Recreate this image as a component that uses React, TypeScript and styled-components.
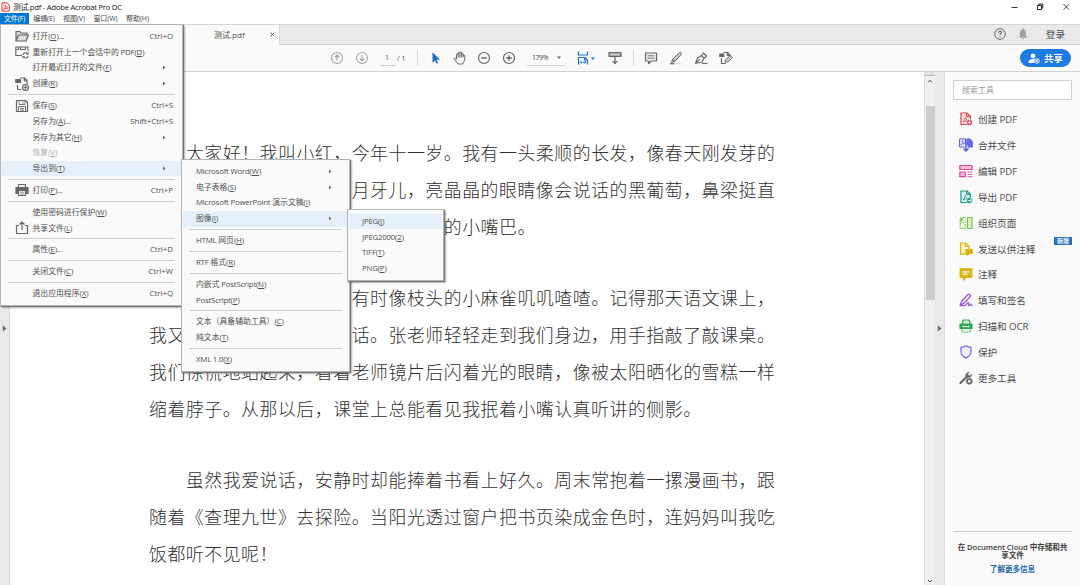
import React from "react";
import styled, { createGlobalStyle } from "styled-components";

const Global = createGlobalStyle`
  *, *::before, *::after { box-sizing: border-box; }
  body {
    margin: 0;
    overflow: hidden;
    background: #fff;
    color: #4b4b4b;
    font-family: "Open Sans", "Noto Sans CJK SC", sans-serif;
  }
  svg { display: block; flex: none; }
`;

const Window = styled.div`
  position: relative;
  display: flex;
  flex-direction: column;
  width: 1080px;
  height: 585px;
  overflow: hidden;
`;

const TitleBar = styled.header`
  display: flex;
  align-items: center;
  height: 13px;
  padding-left: 1px;
  background: #fff;
  color: #222;
  font-size: 7.8px;
  letter-spacing: -0.3px;
  line-height: 12px;
  white-space: nowrap;
`;
const Title = styled.span`margin-left: 3px;`;
const WindowButtons = styled.div`
  display: flex;
  gap: 18px;
  margin: 0 10px 0 auto;
`;

const MenuBar = styled.nav`
  display: flex;
  height: 11px;
  background: #fff;
  font-size: 7px;
  letter-spacing: -0.1px;
  line-height: 11px;
`;
const MenuName = styled.span<{ $active?: boolean; $width: number }>`
  width: ${(p) => p.$width}px;
  text-align: center;
  white-space: nowrap;
  background: ${(p) => (p.$active ? "#0078d4" : "transparent")};
  color: ${(p) => (p.$active ? "#fff" : "#444")};
`;

const TabBar = styled.div`
  display: flex;
  height: 21px;
  border-top: 1px solid #d6d6d6;
  border-bottom: 1px solid #d4d4d4;
  background: #e9e9e9;
`;
const Tab = styled.div`
  display: flex;
  align-items: center;
  width: 280px;
  height: 20px;
  padding: 0 4px 1px 214px;
  background: #fafafa;
  border-right: 1px solid #d8d8d8;
  font-size: 8px;
  white-space: nowrap;
  svg { margin-left: auto; }
`;
const Account = styled.div`
  display: flex;
  align-items: center;
  margin: 0 15px 0 auto;
  padding-bottom: 1px;
  font-size: 9.6px;
  gap: 12px;
  span { margin-left: 6px; }
`;

const Toolbar = styled.div`
  display: flex;
  align-items: center;
  height: 27px;
  padding: 0 9px 0 330px;
  background: #fafafa;
  border-bottom: 1px solid #d0d0d0;
  font-size: 7px;
`;
const Tool = styled.span<{ $gap?: number }>`margin-left: ${(p) => p.$gap ?? 0}px;`;
const Field = styled.span<{ $width: number; $gap: number }>`
  display: flex;
  align-items: center;
  justify-content: space-between;
  width: ${(p) => p.$width}px;
  height: 15px;
  margin-left: ${(p) => p.$gap}px;
  padding: 0 4px 0 5px;
  border-bottom: 1px solid #d2d2d2;
  letter-spacing: -0.4px;
`;
const Divider = styled.span<{ $gap: number }>`
  width: 1px;
  height: 16px;
  margin-left: ${(p) => p.$gap}px;
  background: #d8d8d8;
`;
const ShareButton = styled.button`
  display: flex;
  align-items: center;
  justify-content: center;
  gap: 4px;
  width: 51px;
  height: 18px;
  margin-left: auto;
  padding: 0;
  border: 0;
  border-radius: 9px;
  background: #1e7be4;
  color: #fff;
  font: 700 9.4px "Noto Sans CJK SC", sans-serif;
`;

const Workspace = styled.main`
  display: flex;
  flex: 1;
  min-height: 0;
`;
const Gutter = styled.div`
  display: flex;
  align-items: center;
  justify-content: center;
  width: 10px;
  background: #e9e9e9;
  border-right: 1px solid #dcdcdc;
`;
const Page = styled.article`
  flex: 1;
  padding: 62px 0 0 139px;
  background: #fff;
  color: #303030;
  font-family: "Noto Sans CJK SC", sans-serif;
  font-size: 17.9px;
  font-weight: 300;
  letter-spacing: 0.53px;
  line-height: 36.75px;
`;
const Paragraph = styled.p`
  margin: 0 0 35px;
  text-indent: 36.9px;
  white-space: pre;
`;
const ScrollBar = styled.div`
  display: flex;
  flex-direction: column;
  align-items: center;
  justify-content: space-between;
  width: 11px;
  padding: 0 0 1px;
  background: #f0f0f0;
  border-left: 1px solid #dcdcdc;
`;
const Thumb = styled.div`
  width: 9px;
  height: 194px;
  margin: 16px 0 auto;
  background: #cdcdcd;
`;
const ScrollTop = styled.div`
  display: flex;
  flex-direction: column;
  align-items: center;
  height: 18px;
  svg { margin-top: 3px; }
`;
const ScrollCap = styled.div`
  width: 10px;
  height: 4px;
  background: #e3e3e3;
  border-bottom: 1px solid #bcbcbc;
`;

const Panel = styled.aside`
  display: flex;
  flex-direction: column;
  width: 135px;
  padding: 8px 8px 12px;
  background: #fafafa;
`;
const Search = styled.div`
  height: 20px;
  padding-left: 8px;
  border: 1px solid #d0d0d0;
  background: #fff;
  color: #999;
  font-size: 8px;
  line-height: 18px;
`;
const ToolList = styled.div`
  margin-top: 6.4px;
`;
const ToolRow = styled.div`
  position: relative;
  display: flex;
  align-items: center;
  gap: 5px;
  height: 25.87px;
  padding-left: 6px;
  font-size: 9.6px;
  letter-spacing: -0.05px;
  white-space: nowrap;
`;
const NewBadge = styled.span`
  position: absolute;
  top: 1px;
  right: 0;
  width: 18px;
  height: 8px;
  background: #2d72c0;
  color: #fff;
  font-size: 6px;
  font-weight: 700;
  line-height: 8px;
  text-align: center;
`;
const CloudNote = styled.footer`
  margin-top: auto;
  padding-top: 11px;
  border-top: 1px solid #cfcfcf;
  color: #3d3d3d;
  font-size: 7.6px;
  font-weight: 600;
  letter-spacing: -0.05px;
  line-height: 8px;
  text-align: center;
  white-space: nowrap;
`;
const More = styled.a`
  display: block;
  margin-top: 6px;
  color: #1b66b3;
`;

const Popup = styled.div<{ $x: number; $y: number; $w: number; $h: number }>`
  position: absolute;
  left: ${(p) => p.$x}px;
  top: ${(p) => p.$y}px;
  width: ${(p) => p.$w}px;
  height: ${(p) => p.$h}px;
  padding: 3.6px 1px 0;
  border: 1px solid #b4b4b4;
  background: #fafafa;
  box-shadow: 1px 1px 1px #777, 2px 2px 2px rgba(0, 0, 0, 0.25);
  font-size: 7.85px;
`;
const Item = styled.div<{ $active?: boolean; $disabled?: boolean; $pad: number }>`
  display: flex;
  align-items: center;
  height: 15.75px;
  padding: 0 8px 0 ${(p) => p.$pad}px;
  background: ${(p) => (p.$active ? "#e5f0fb" : "transparent")};
  color: ${(p) => (p.$disabled ? "#b3b3b3" : "#505050")};
  line-height: 11px;
  white-space: nowrap;
  u { text-decoration-thickness: 0.6px; text-underline-offset: 1px; }
`;
const Latin = styled.span`letter-spacing: -0.22px;`;
const IconSlot = styled.span`
  display: flex;
  justify-content: center;
  width: 14px;
  margin-right: 3.5px;
`;
const Shortcut = styled.span`margin-left: auto;`;
const Arrow = styled.span<{ $inset: number }>`
  margin: 0 ${(p) => p.$inset}px 0 auto;
`;
const Rule = styled.div`
  height: 1px;
  margin: 2.55px 6px;
  background: #d0d0d0;
`;

const Svg = ({ s = 14, children, color = "#666", w = 1.2 }: { s?: number; children: React.ReactNode; color?: string; w?: number }) => (
  <svg width={s} height={s} viewBox="0 0 14 14" fill="none" stroke={color} strokeWidth={w} strokeLinejoin="round">{children}</svg>
);
const Triangle = ({ down, color = "#666" }: { down?: boolean; color?: string }) => (
  <svg width="4" height="5" viewBox="0 0 4 5" fill={color}><path d={down ? "M0 1.5h4L2 4z" : "M1 0.5v4L3.4 2.5z"} /></svg>
);
const PaneArrow = () => (
  <svg width="5" height="7" viewBox="0 0 5 7" fill="#666"><path d="M.8.500v6L4.500 3.500z" /></svg>
);

const PdfSheet = ({ color, fill }: { color: string; fill: string }) => (
  <>
    <path d="M2 1h6l3.3 3.2V12.5H2z" fill={fill} stroke={color} />
    <path d="M7.7 1v3.5h3.6" stroke={color} />
    <path d="M4 10c1.4-1.4 2.4-3.4 2.3-5 .5 2 1.5 3.2 3 3.7-2-.1-4 .5-5.300 1.300z" stroke={color} strokeWidth=".8" />
  </>
);

const icons: Record<string, React.ReactNode> = {
  open: <Svg><path d="M1 12V2.500h4l1 1.500h6v2M1 12l2.500-6H13.500L11 12z" fill="#ddd" /></Svg>,
  reopen: <Svg w={1.1}><path d="M7 10.500H.8V2h12.200v4.500" /><path d="M.8 4.500h2.700V2.200M5.500 2v2.500h5V2" /><path d="M7.800 10a2.700 2.700 0 0 1 4.900-1M13.200 10.800a2.700 2.700 0 0 1-4.900 1" /><path d="M13.200 7.300V9.300h-2M7.800 13.500v-2h2" strokeWidth=".8" /></Svg>,
  create: <Svg><path d="M5 1h4.500L12 3.500V7M9.300 1v3H12" /><path d="M.8 2.500h4.700v3H.8z" fill="#666" /><path d="M2.500 8v4.500H6" /><circle cx="10.500" cy="10.500" r="2.900" /><path d="M10.500 8.800v3.400M8.800 10.500h3.400" /></Svg>,
  save: <Svg><path d="M1.500 1.500h9L12.500 3.500v9h-11z" /><path d="M4 1.500v4h6v-4M3.500 12.500v-5h7v5M8 2.500v2M5 9.500h4M5 11.200h4" strokeWidth=".9" /></Svg>,
  print: <Svg><path d="M3.500 4V1.500h7V4" /><path d="M1 4.500h12v6H1z" fill="#666" /><path d="M3.500 7.500h7v5h-7z" fill="#fafafa" /><path d="M5 9.200h4M5 11h4" strokeWidth=".7" /></Svg>,
  share: <Svg><path d="M4 4.500H1.500v8h11v-8H10M7 9V1.200M4.500 3.500L7 1l2.500 2.500" /></Svg>,
};

type Entry = "-" | { t: string; k?: string; icon?: string; sub?: boolean; on?: boolean; off?: boolean };

const fileMenu: Entry[] = [
  { t: "打开(&O)...", k: "Ctrl+O", icon: "open" },
  { t: "重新打开上一个会话中的 PDF(&D)", icon: "reopen" },
  { t: "打开最近打开的文件(&F)", sub: true },
  { t: "创建(&R)", icon: "create", sub: true },
  "-",
  { t: "保存(&S)", k: "Ctrl+S", icon: "save" },
  { t: "另存为(&A)...", k: "Shift+Ctrl+S" },
  { t: "另存为其它(&H)", sub: true },
  { t: "恢复(&V)", off: true },
  { t: "导出到(&T)", sub: true, on: true },
  "-",
  { t: "打印(&P)...", k: "Ctrl+P", icon: "print" },
  "-",
  { t: "使用密码进行保护(&W)" },
  { t: "共享文件(&L)", icon: "share" },
  "-",
  { t: "属性(&E)...", k: "Ctrl+D" },
  "-",
  { t: "关闭文件(&C)", k: "Ctrl+W" },
  "-",
  { t: "退出应用程序(&X)", k: "Ctrl+Q" },
];
const exportMenu: Entry[] = [
  { t: "Microsoft Word(&W)", sub: true },
  { t: "电子表格(&S)", sub: true },
  { t: "Microsoft PowerPoint 演示文稿(&I)" },
  { t: "图像(&I)", sub: true, on: true },
  "-",
  { t: "HTML 网页(&H)" },
  "-",
  { t: "RTF 格式(&R)" },
  "-",
  { t: "内嵌式 PostScript(&N)" },
  { t: "PostScript(&P)" },
  "-",
  { t: "文本（具备辅助工具）(&C)" },
  { t: "纯文本(&T)" },
  "-",
  { t: "XML 1.0(&X)" },
];
const imageMenu: Entry[] = [
  { t: "JPEG(&J)", on: true },
  { t: "JPEG2000(&2)" },
  { t: "TIFF(&T)" },
  { t: "PNG(&P)" },
];

// Latin runs are set tighter than the Chinese text around them.
const Runs = ({ text }: { text: string }) => (
  <>{text.split(/([ -~]+)/).map((run, i) => (i % 2 ? <Latin key={i}>{run}</Latin> : run))}</>
);
const Label = ({ text }: { text: string }) => {
  const [a, b] = text.split("&");
  return <span><Runs text={a} /><u>{b[0]}</u><Runs text={b.slice(1)} /></span>;
};

const Entries = ({ list, pad, slot, inset = 0 }: { list: Entry[]; pad: number; slot?: boolean; inset?: number }) => (
  <>
    {list.map((e, i) =>
      e === "-" ? <Rule key={i} /> : (
        <Item key={i} $pad={pad} $active={e.on} $disabled={e.off}>
          {slot && <IconSlot>{e.icon && icons[e.icon]}</IconSlot>}
          <Label text={e.t} />
          {e.k && <Shortcut>{e.k}</Shortcut>}
          {e.sub && <Arrow $inset={inset}><Triangle /></Arrow>}
        </Item>
      )
    )}
  </>
);

const tools: { name: string; icon: React.ReactNode; badge?: boolean }[] = [
  { name: "创建 PDF", icon: <Svg color="#d9434e"><PdfSheet color="#d9434e" fill="#fbe3e4" /><circle cx="10.500" cy="10.500" r="3" fill="#d9434e" stroke="#fafafa" strokeWidth=".6" /><path d="M10.500 8.800v3.400M8.800 10.500h3.400" stroke="#fff" strokeWidth=".9" /></Svg> },
  { name: "合并文件", icon: <Svg color="#5c5ce0" w={1}><path d="M6.500 9H.6V.8h5.900z" fill="#e7e7fb" /><path d="M1.800 6.800c1.400-1.200 2-3 1.800-4.500.4 1.800 1.200 2.800 2.200 3.200-1.300 0-2.800.4-4 1.300z" strokeWidth=".7" /><path d="M7.800.9h3L13.300 3.400V9H7.800z" fill="#6a6ae6" /><path d="M7 6.500v6.500M4.500 10.500L7 13l2.500-2.500" stroke="#fafafa" strokeWidth="3" /><path d="M7 6v6.800M4.500 10.500L7 13l2.500-2.500" strokeWidth="1.500" /></Svg> },
  { name: "编辑 PDF", icon: <Svg color="#d6459b"><path d="M.8 1.500h12.400v4H.8z" fill="#f5bede" /><path d="M.8 8h5.500v4.700H.8z" fill="#f5bede" /><path d="M8.500 8h5M8.500 10.300h5M8.500 12.700h5" strokeWidth=".9" /></Svg> },
  { name: "导出 PDF", icon: <Svg color="#179581"><PdfSheet color="#179581" fill="#dff2ee" /><circle cx="10.500" cy="10.500" r="3" fill="#179581" stroke="#fafafa" strokeWidth=".6" /><path d="M8.700 10.500h3.400M10.800 9l1.400 1.500-1.400 1.500" stroke="#fff" strokeWidth=".8" /></Svg> },
  { name: "组织页面", icon: <Svg color="#7cc24a"><path d="M8.500 1.500h4.500v11H8.500z" fill="#dff2d0" /><path d="M1.200 6h5v6.500h-5z" fill="#eef8e6" strokeDasharray="1.500 .8" /><path d="M1 1.500l2.500 3M7 1.500H4.500L2.500 4M1 3.500v1.300h2" /></Svg> },
  { name: "发送以供注释", badge: true, icon: <Svg color="#d9b316"><path d="M1.500 1h5L10 4.200v8H1.500z" fill="#fbf2c6" /><path d="M6.300 1v3.500H10" /><path d="M7 7.500h6.300v4H10L8.500 13v-1.500H7z" fill="#d9b316" /></Svg> },
  { name: "注释", icon: <Svg color="#d9b316"><path d="M1.200 1.800h11.600v8.500H7.200L4.500 13v-2.700H1.200z" fill="#d9b316" /><path d="M3.500 4.800h7M3.500 7.200h5" stroke="#fff" /></Svg> },
  { name: "填写和签名", icon: <Svg color="#9652d9"><path d="M1 12.500l2-5L9 1.300c1-.8 3.200 1 2.300 2.300L5.500 9.800 1 12.500z" fill="#eadcf8" /><path d="M1 12.700h4.500c2 0 2-3 3.500-3s-.5 3 1 3 .7-1.500 1.700-1.500.5 1.500 1.800 1.500" /></Svg> },
  { name: "扫描和 OCR", icon: <Svg color="#2fa84f"><path d="M3.500 5V2.500L5 1h4.500l1.500 1.500V5" fill="#d8f0dd" /><path d="M1 5h12v4.300H1z" fill="#2fa84f" /><path d="M3.500 7.500h7" stroke="#fff" /><path d="M3 10.500v2.500h8v-2.500" strokeDasharray="1.600 .8" /></Svg> },
  { name: "保护", icon: <Svg color="#6a6be0"><path d="M7 .8c1.500 1.200 3.200 1.500 5 1.500v4.500c0 3-2.400 5-5 6.300-2.600-1.300-5-3.300-5-6.300V2.300C3.800 2.300 5.500 2 7 .8z" fill="#f0f0fc" /></Svg> },
  { name: "更多工具", icon: <Svg color="#666"><path d="M1.500 12L7 6.500" strokeWidth="2.200" strokeLinecap="round" /><path d="M10.500 1.200L8.600 3.300l1.700 1.600L12.500 3c.5 2-1 3.700-3 3.500L7.500 7 6.700 5.500C6 3.500 8 .8 10.500 1.200z" fill="#666" strokeWidth=".4" /><circle cx="10.300" cy="10.300" r="2.200" fill="#fafafa" strokeWidth="1.600" /><circle cx="10.300" cy="10.300" r="3.300" strokeWidth=".7" strokeDasharray="1.200 1.300" /></Svg> },
];

// Full-width spaces keep the columns that lie under the open menus.
const blank = (n: number) => "\u3000".repeat(n);
const paragraphs = [
  ["大家好！我叫小红，今年十一岁。我有一头柔顺的长发，像春天刚发芽的", blank(11) + "月牙儿，亮晶晶的眼睛像会说话的黑葡萄，鼻梁挺直", blank(16) + "的小嘴巴。"],
  [blank(9) + "有时像枝头的小麻雀叽叽喳喳。记得那天语文课上，", "我又" + blank(9) + "话。张老师轻轻走到我们身边，用手指敲了敲课桌。", "我们惊慌地站起来，看着老师镜片后闪着光的眼睛，像被太阳晒化的雪糕一样", "缩着脖子。从那以后，课堂上总能看见我抿着小嘴认真听讲的侧影。"],
  ["虽然我爱说话，安静时却能捧着书看上好久。周末常抱着一摞漫画书，跟", "随着《查理九世》去探险。当阳光透过窗户把书页染成金色时，连妈妈叫我吃", "饭都听不见呢！"],
];

export default function App() {
  return (
    <Window>
      <Global />
      <TitleBar>
        <svg width="9" height="10" viewBox="0 0 9 10" fill="none" stroke="#d9343a"><path d="M1 .8h5l2.300 2.300v6H1z" fill="#fff0f0" /><path d="M2.300 7.500C4 6 4.500 4.500 4.200 3c.4 2 1.300 3 2.800 3.200-2 0-3.500.5-4.700 1.300z" strokeWidth=".8" /></svg>
        <Title>测试.pdf - Adobe Acrobat Pro DC</Title>
        <WindowButtons>
          <svg width="8" height="8" viewBox="0 0 8 8" stroke="#333"><path d="M1.500 4.500h6" /></svg>
          <svg width="8" height="8" viewBox="0 0 8 8" fill="none" stroke="#222"><path d="M1.500 2.500h4v4h-4zM2.800 2.300V1h4v4H5.700" /></svg>
          <svg width="8" height="8" viewBox="0 0 8 8" stroke="#333" strokeWidth=".9"><path d="M1.500 1.200l5.500 5.500M7 1.200L1.500 6.700" /></svg>
        </WindowButtons>
      </TitleBar>
      <MenuBar>
        <MenuName $width={29} $active>文件(F)</MenuName>
        <MenuName $width={30}>编辑(E)</MenuName>
        <MenuName $width={30}>视图(V)</MenuName>
        <MenuName $width={33}>窗口(W)</MenuName>
        <MenuName $width={31}>帮助(H)</MenuName>
      </MenuBar>
      <TabBar>
        <Tab>
          测试.pdf
          <svg width="5" height="5" viewBox="0 0 5 5" stroke="#555"><path d="M.7.7l3.600 3.600M4.300.7L.7 4.300" /></svg>
        </Tab>
        <Account>
          <svg width="12" height="12" viewBox="0 0 12 12" fill="none" stroke="#666"><circle cx="6" cy="6" r="5.300" /><path d="M4.500 4.700c0-2 3-1.900 3-.2 0 1.200-1.500 1.100-1.500 2.500M6 8v1.200" strokeWidth="1.100" /></svg>
          <svg width="10" height="12" viewBox="0 0 10 12" fill="#a0a0a0"><path d="M4.300.5h1.400v1C7.500 2 8 3.500 8 5v2.700L9.500 9.500H.5L2 7.700V5c0-1.500.5-3 2.300-3.500zM3.800 10h2.400c0 1.600-2.400 1.600-2.400 0z" /></svg>
          <span>登录</span>
        </Account>
      </TabBar>
      <Toolbar>
        <Tool><Svg color="#a5a5a5" w={1.1}><circle cx="7" cy="7" r="5.500" /><path d="M7 10V4M4.700 6.300L7 4l2.300 2.300" /></Svg></Tool>
        <Tool $gap={10.500}><Svg color="#a5a5a5" w={1.1}><circle cx="7" cy="7" r="5.500" /><path d="M7 4v6M4.700 7.700L7 10l2.300-2.300" /></Svg></Tool>
        <Field $width={16} $gap={11.500}>1</Field>
        <Tool $gap={1}>/ 1</Tool>
        <Divider $gap={11.500} />
        <Tool $gap={10}><Svg color="none"><path d="M4.500 1.200v10.600l2.600-2.400 1.500 3.400 1.500-.7-1.500-3.300h3.500z" fill="#1a6ec1" /></Svg></Tool>
        <Tool $gap={11}><Svg w={1}><path d="M4.800 13C3.800 11 2 9 1 7.800c.4-1.300 1.600-.7 2.600.5V3.300c0-1 1.500-1 1.600 0V2c.1-1 1.600-1 1.700 0v-.5c.2-1 1.600-1 1.700.3v1c.2-.8 1.500-.8 1.600.3v1.500c.3-.8 1.600-.7 1.600.4C12 9 11 11 9.800 13zM5.200 3v3.500M6.900 2v4.500M8.600 2.500v4M10.200 3.500v3" /></Svg></Tool>
        <Tool $gap={10.500}><Svg><circle cx="7" cy="7" r="5.500" /><path d="M4.200 7h5.600" strokeWidth="1.500" /></Svg></Tool>
        <Tool $gap={10.500}><Svg><circle cx="7" cy="7" r="5.500" /><path d="M4.200 7h5.600M7 4.200v5.600" strokeWidth="1.500" /></Svg></Tool>
        <Field $width={38} $gap={11}>179%<Triangle down /></Field>
        <Tool $gap={12}><Svg color="#1f75cc"><path d="M1.500.5v3.500h9V.5M1.500 13.500V6.500H8l2.500 2.500v4.500M7.500 6.500V9h3" /><path d="M3 11.200h6M4.500 9.700L3 11.200l1.500 1.500M7.500 9.700L9 11.200l-1.500 1.500" strokeWidth=".9" /></Svg></Tool>
        <Tool $gap={0.500}><Triangle down color="#1f75cc" /></Tool>
        <Tool $gap={12.500}><Svg><path d="M1 1.500h12v4H1z" fill="#aaa" /><path d="M3 3.500h8" stroke="#fff" strokeWidth=".8" strokeDasharray="1.200 1" /><path d="M7 6v6.500M4.700 10.200L7 12.700l2.300-2.500" /></Svg></Tool>
        <Divider $gap={11} />
        <Tool $gap={10.500}><Svg><path d="M1.500 2h11v8H7.300l-2.800 2.700V10h-3z" fill="#eee" /><path d="M3.500 4.800h7M3.500 7.200h7" strokeWidth=".9" /></Svg></Tool>
        <Tool $gap={11}><Svg w={1}><path d="M3.500 8.500L10.500 1.500c1-.8 2.500.8 1.800 1.800L6 10.300l-3.500 1zM3.500 8.500L6 10.300" fill="#ccc" /><path d="M1 12.700h4.500" strokeWidth="1.300" /><path d="M7 12.700h5.500" stroke="#ddd" /></Svg></Tool>
        <Tool $gap={10.500}><Svg w={1.1}><path d="M1.500 12.300L3.500 7l4-2.500 2.700 2.800L8 11.300zM7.500 4.500L9.300 2l3.300 3-2.400 2.300M1.500 12.300l4-4" fill="#eee" /><path d="M8 12.500h5.500" /></Svg></Tool>
        <Tool $gap={11}><Svg><path d="M4.500 1.500h4L11 4v1.500M2.500 7v5.500H7M8.300 1.500V4.300H11" /><path d="M.8 3h4v2.500h-4z" fill="#666" /><path d="M6 11l.7-2.500L11.500 4.500l2 2L9 11z" fill="#ccc" strokeWidth=".9" /></Svg></Tool>
        <ShareButton>
          <svg width="12" height="11" viewBox="0 0 12 11" fill="#fff"><circle cx="5" cy="3" r="2.400" /><path d="M.5 10c0-3 1.500-4 4.500-4 1.200 0 2 .2 2.500.6C6 7.500 6 9 6.300 10z" /><circle cx="9" cy="8" r="2.300" fill="none" stroke="#fff" strokeWidth=".9" /><path d="M8.600 6.700h.8v2.600h-.8zM7.700 7.600h2.600v.8H7.700z" /></svg>
          共享
        </ShareButton>
      </Toolbar>
      <Workspace>
        <Gutter><PaneArrow /></Gutter>
        <Page>
          {paragraphs.map((lines, i) => <Paragraph key={i}>{lines.join("\n")}</Paragraph>)}
        </Page>
        <ScrollBar>
          <ScrollTop>
            <ScrollCap />
            <svg width="6" height="4" viewBox="0 0 6 4" fill="none" stroke="#444"><path d="M1 3.300l2-2 2 2" /></svg>
          </ScrollTop>
          <Thumb />
          <svg width="6" height="5" viewBox="0 0 6 5" fill="none" stroke="#444"><path d="M1 1l2 2 2-2" /></svg>
        </ScrollBar>
        <Gutter><PaneArrow /></Gutter>
        <Panel>
          <Search>搜索工具</Search>
          <ToolList>
            {tools.map((t) => (
              <ToolRow key={t.name}>{t.icon}<span>{t.name}</span>{t.badge && <NewBadge>新增</NewBadge>}</ToolRow>
            ))}
          </ToolList>
          <CloudNote>
            在 Document Cloud 中存储和共<br />享文件
            <More>了解更多信息</More>
          </CloudNote>
        </Panel>
      </Workspace>
      <Popup $x={0} $y={24} $w={183} $h={282}><Entries list={fileMenu} pad={13} slot inset={7} /></Popup>
      <Popup $x={181} $y={159} $w={169} $h={213}><Entries list={exportMenu} pad={13} inset={8} /></Popup>
      <Popup $x={347} $y={209} $w={97} $h={72}><Entries list={imageMenu} pad={13} /></Popup>
    </Window>
  );
}
